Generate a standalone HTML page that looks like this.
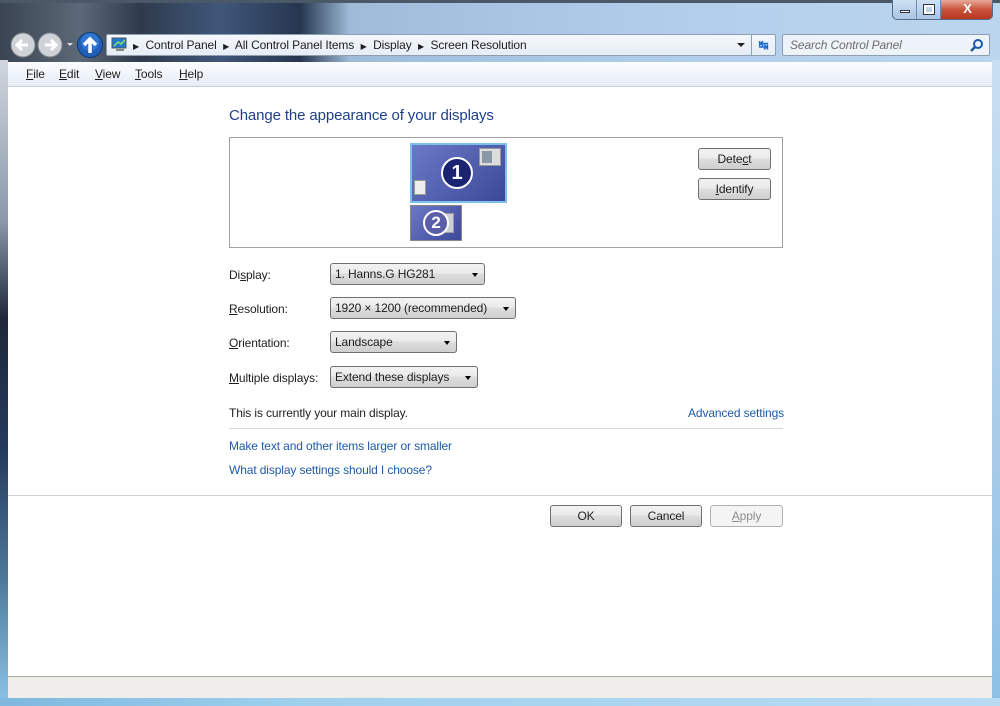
<!DOCTYPE html>
<html><head><meta charset="utf-8"><style>
*{margin:0;padding:0;box-sizing:border-box}
body{width:1000px;height:706px;overflow:hidden;font-family:"Liberation Sans",sans-serif;font-size:12px;color:#1e1e1e;position:relative;background:#6fa4cf;letter-spacing:-0.12px}
.abs{position:absolute}
#glass{left:0;top:0;width:1000px;height:62px;background:linear-gradient(90deg,#3a4452 0,#5d6978 8%,#2f3b4c 14%,#40577a 22%,#26364f 30%,#9ebbd8 35%,#aac8e6 55%,#b4d0ec 75%,#bcd5ee 100%)}
#lb{left:0;top:60px;width:8px;height:646px;background:linear-gradient(180deg,#cfd6de 0,#8a98a8 25%,#1e2838 40%,#243a5c 60%,#4c7898 80%,#8cc4e8 100%)}
#rb{right:0;top:60px;width:8px;height:646px;background:linear-gradient(180deg,#c9dff2,#a8cbe8 60%,#8cc0e6)}
#bb{left:0;top:698px;width:1000px;height:8px;background:linear-gradient(90deg,#7fb8de,#9fd0ee 30%,#b8dbf2)}
#addr{left:106px;top:34px;width:670px;height:22px;background:linear-gradient(#f4f7fb,#e6edf5);border:1px solid #8e9fb4;border-radius:2px}
#srch{left:782px;top:34px;width:208px;height:22px;background:#eef3f9;border:1px solid #8e9fb4;border-radius:2px}
#menu{left:8px;top:62px;width:984px;height:25px;background:linear-gradient(#fbfcfe,#e6ecf5);border-bottom:1px solid #c7d1dd}
#menu span{position:absolute;top:5px;font-size:12px}
#content{left:8px;top:87px;width:984px;height:590px;background:#fff}
#status{left:8px;top:676px;width:984px;height:22px;background:#f0eeeb;border-top:1px solid #a8a8a8}
.btn{position:absolute;height:22px;border:1px solid #707070;border-radius:3px;background:linear-gradient(#f2f2f2 0,#ebebeb 45%,#dddddd 50%,#cfcfcf 100%);text-align:center;line-height:20px;font-size:12px}
.sel{position:absolute;height:22px;border:1px solid #707070;border-radius:3px;background:linear-gradient(#f2f2f2 0,#ebebeb 45%,#dddddd 50%,#cfcfcf 100%);line-height:20px;padding-left:4px;font-size:12px}
.sel:after{content:"";position:absolute;right:6px;top:9px;border-left:3.5px solid transparent;border-right:3.5px solid transparent;border-top:4px solid #000}
.lbl{position:absolute;font-size:12px}
.link{position:absolute;color:#1d5aa8;font-size:12px}
u{text-decoration:underline}
</style></head><body>
<div id="glass" class="abs"></div>
<div class="abs" style="left:0;top:0;width:1000px;height:3px;background:#4a5868"></div>
<div class="abs" style="left:892px;top:0;width:101px;height:20px;border:1px solid #4f6c8e;border-top:none;border-radius:0 0 5px 5px;background:linear-gradient(#cfe0f2,#a9c5e3);overflow:hidden">
 <div class="abs" style="left:0;top:0;width:24px;height:20px;border-right:1px solid #6d8bb0"><div class="abs" style="left:7px;top:10px;width:10px;height:3px;background:#fff;border:1px solid #334"></div></div>
 <div class="abs" style="left:24px;top:0;width:24px;height:20px;border-right:1px solid #6d8bb0"><div class="abs" style="left:7px;top:5px;width:10px;height:9px;border:2px solid #fff;outline:1px solid #334"></div></div>
 <div class="abs" style="left:48px;top:0;width:53px;height:20px;background:linear-gradient(#e8a898,#c8503a 50%,#b8321e)"><div class="abs" style="left:0;top:1px;width:53px;text-align:center;color:#fff;font-weight:bold;font-size:13px">X</div></div>
</div>
<svg class="abs" style="left:8px;top:31px" width="100" height="28">
 <circle cx="15" cy="14" r="12" fill="#cfd3d8" stroke="#7c8590"/><path d="M20 14H10M14 9l-5 5 5 5" stroke="#fff" stroke-width="3" fill="none"/>
 <circle cx="42" cy="14" r="12" fill="#cfd3d8" stroke="#7c8590"/><path d="M37 14h10M43 9l5 5-5 5" stroke="#fff" stroke-width="3" fill="none"/>
 <path d="M59 12l3 3 3-3z" fill="#ddd"/>
 <circle cx="82" cy="14" r="12.5" fill="#1f5fb8" stroke="#123a70"/><circle cx="82" cy="11" r="9" fill="#3c86e0" opacity=".6"/><path d="M82 22V8M76 14l6-6 6 6" stroke="#fff" stroke-width="3.5" fill="none"/>
</svg>
<div id="addr" class="abs">
 <svg class="abs" style="left:4px;top:2px" width="18" height="16"><rect x="1" y="1" width="14" height="10" fill="#1f7bd0" stroke="#555"/><path d="M3 9l4-4 3 2 4-4" stroke="#8ee060" fill="none" stroke-width="1.5"/><rect x="5" y="12" width="8" height="2" fill="#888"/></svg>
 <div class="abs" style="left:26px;top:3px;font-size:12px;white-space:nowrap"><span style="font-size:8px">▶</span>&nbsp; Control Panel &nbsp;<span style="font-size:8px">▶</span>&nbsp; All Control Panel Items &nbsp;<span style="font-size:8px">▶</span>&nbsp; Display &nbsp;<span style="font-size:8px">▶</span>&nbsp; Screen Resolution</div>
 <div class="abs" style="right:30px;top:8px;border-left:4px solid transparent;border-right:4px solid transparent;border-top:4px solid #222"></div>
 <div class="abs" style="right:0;top:0;width:24px;height:20px;border-left:1px solid #8e9fb4;color:#1a6ad0;font-size:12px;text-align:center;line-height:20px;font-weight:bold">↹</div>
</div>
<div id="srch" class="abs"><span class="abs" style="left:7px;top:3px;font-style:italic;color:#6d6d6d">Search Control Panel</span>
 <svg class="abs" style="right:5px;top:3px" width="14" height="14"><circle cx="8" cy="6" r="4" stroke="#1a5aa8" stroke-width="2" fill="none"/><path d="M5 9l-4 4" stroke="#1a5aa8" stroke-width="2.5"/></svg></div>
<div id="lb" class="abs"></div><div id="rb" class="abs"></div><div id="bb" class="abs"></div>
<div id="menu" class="abs">
 <span style="left:18px"><u>F</u>ile</span><span style="left:51px"><u>E</u>dit</span><span style="left:87px"><u>V</u>iew</span><span style="left:127px"><u>T</u>ools</span><span style="left:171px"><u>H</u>elp</span>
</div>
<div id="content" class="abs"></div>
<div class="abs" style="left:229px;top:107px;font-size:15px;color:#1e3f8a">Change the appearance of your displays</div>
<div class="abs" style="left:229px;top:137px;width:554px;height:111px;border:1px solid #a0a0a0;background:#fff"></div>
<div class="abs" style="left:410px;top:143px;width:97px;height:60px;border:2px solid #7cc0ee;background:linear-gradient(135deg,#6c78c8,#3c4898)"></div>
<div class="abs" style="left:441px;top:157px;width:32px;height:32px;border-radius:50%;background:#1a2470;border:2px solid #fff;color:#fff;font-weight:bold;font-size:20px;text-align:center;line-height:28px">1</div>
<div class="abs" style="left:479px;top:148px;width:22px;height:18px;background:#ddd;border:1px solid #999"><div style="margin:2px;width:10px;height:12px;background:#8a98a8"></div></div>
<div class="abs" style="left:414px;top:180px;width:12px;height:15px;background:#eee;border:1px solid #999"></div>
<div class="abs" style="left:410px;top:205px;width:52px;height:36px;border:1px solid #888;background:linear-gradient(135deg,#6c78c8,#3c4898)"></div>
<div class="abs" style="left:440px;top:213px;width:14px;height:20px;background:#ccd;border:1px solid #999"></div>
<div class="abs" style="left:423px;top:210px;width:26px;height:26px;border-radius:50%;background:#5a5ea8;border:2px solid #fff;color:#fff;font-weight:bold;font-size:17px;text-align:center;line-height:22px">2</div>
<div class="btn" style="left:698px;top:148px;width:73px">Dete<u>c</u>t</div>
<div class="btn" style="left:698px;top:178px;width:73px"><u>I</u>dentify</div>
<div class="lbl" style="left:229px;top:268px">Di<u>s</u>play:</div>
<div class="sel" style="left:330px;top:263px;width:155px">1. Hanns.G HG281</div>
<div class="lbl" style="left:229px;top:302px"><u>R</u>esolution:</div>
<div class="sel" style="left:330px;top:297px;width:186px">1920 × 1200 (recommended)</div>
<div class="lbl" style="left:229px;top:336px"><u>O</u>rientation:</div>
<div class="sel" style="left:330px;top:331px;width:127px">Landscape</div>
<div class="lbl" style="left:229px;top:371px"><u>M</u>ultiple displays:</div>
<div class="sel" style="left:330px;top:366px;width:148px">Extend these displays</div>
<div class="lbl" style="left:229px;top:406px">This is currently your main display.</div>
<div class="link" style="left:688px;top:406px">Advanced settings</div>
<div class="abs" style="left:229px;top:428px;width:554px;height:1px;background:#d6d6d6"></div>
<div class="link" style="left:229px;top:439px">Make text and other items larger or smaller</div>
<div class="link" style="left:229px;top:463px">What display settings should I choose?</div>
<div class="abs" style="left:8px;top:495px;width:984px;height:1px;background:#d0d0d0"></div>
<div class="btn" style="left:550px;top:505px;width:72px">OK</div>
<div class="btn" style="left:630px;top:505px;width:72px">Cancel</div>
<div class="btn" style="left:710px;top:505px;width:73px;border-color:#adb2b5;background:#f4f4f4;color:#8d8d8d"><u>A</u>pply</div>
<div id="status" class="abs"></div>
</body></html>
